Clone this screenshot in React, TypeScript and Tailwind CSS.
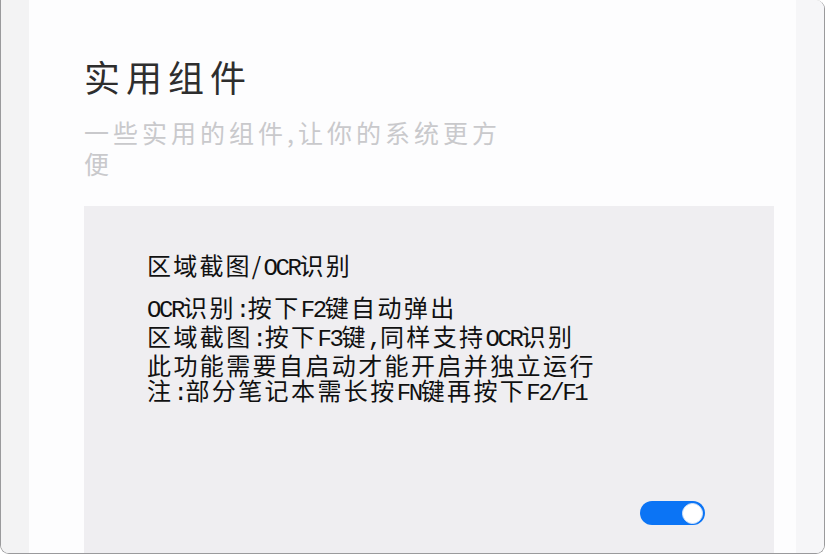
import React, { useState } from 'react';

const cjk = '"Noto Sans CJK SC", "Noto Sans", sans-serif';
const mono = '"Liberation Mono", "Noto Sans CJK SC", monospace';

const Lat = ({ children }: { children: React.ReactNode }) => (
  <span className="tracking-[-2.4px]" style={{ fontFamily: mono }}>
    {children}
  </span>
);

const App = () => {
  const [on, setOn] = useState(true);

  return (
    <div className="w-[825px] h-[556px] bg-white overflow-hidden" style={{ fontFamily: cjk }}>
      <div className="h-[554px] flex border-l border-r border-b border-[#9a9a9c] rounded-tr-[9px] rounded-b-[9px] overflow-hidden">
        {/* left strip */}
        <div className="w-[28px] shrink-0 bg-[#f3f3f4]"></div>

        {/* main panel */}
        <div className="flex-1 flex flex-col bg-[#fdfdfe] pl-[55px] pr-[22px]">
          <div className="pt-[54px]">
            <h1 className="text-[36px] leading-[44px] tracking-[6px] text-[#2e2e2e] font-normal">实用组件</h1>
            <p className="mt-[19px] max-w-[440px] text-[25px] leading-[31px] tracking-[4px] text-[#c9c9cc]">
              一些实用的组件,让你的系统更方便
            </p>
          </div>

          <div className="mt-[27px] flex-1 flex flex-col bg-[#efeef1] pl-[63px] pr-[69px] pt-[46px]">
            <div className="text-[24px] leading-[26px] tracking-[2.2px] text-[#111]">
              区域截图/<Lat>OCR</Lat>识别
            </div>
            <div className="mt-[12px] text-[24px] leading-[25px] tracking-[2.4px] text-[#111]">
              <div>
                <Lat>OCR</Lat>识别<Lat>:</Lat>按下<Lat>F2</Lat>键自动弹出
              </div>
              <div>
                区域截图<Lat>:</Lat>按下<Lat>F3</Lat>键<Lat>,</Lat>同样支持<Lat>OCR</Lat>识别
              </div>
              <div>此功能需要自启动才能开启并独立运行</div>
              <div>
                注<Lat>:</Lat>部分笔记本需长按<Lat>FN</Lat>键再按下<Lat>F2/F1</Lat>
              </div>
            </div>

            <div className="mt-[95px] flex justify-end">
              <button
                onClick={() => setOn(!on)}
                className={`w-[65px] h-[24px] rounded-full flex items-center px-[2px] ${
                  on ? 'bg-[#0b74f5] justify-end' : 'bg-[#c8c8cc] justify-start'
                }`}
              >
                <span className="w-[21px] h-[21px] rounded-full bg-white border border-[#d6e4f7]"></span>
              </button>
            </div>
          </div>
        </div>

        {/* right strip */}
        <div className="w-[28px] shrink-0 bg-[#f6f6f8]"></div>
      </div>
    </div>
  );
};

export default App;
